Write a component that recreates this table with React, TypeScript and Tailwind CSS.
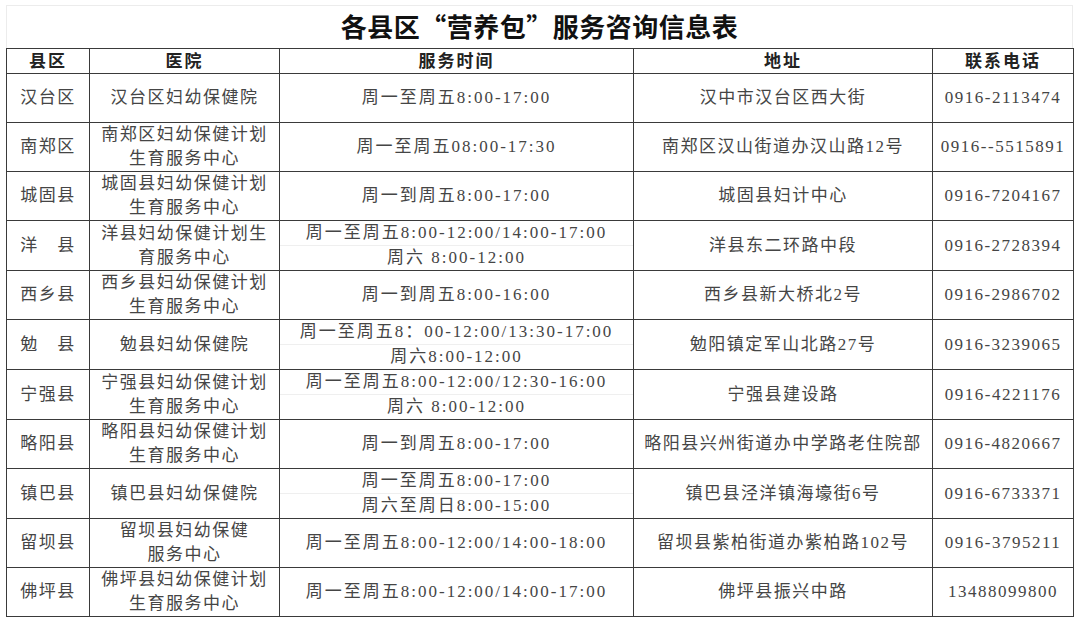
import React from "react";

// ---------------------------------------------------------------------------
// Data
// ---------------------------------------------------------------------------

interface Row {
  county: string;
  hospital: string[];
  hours: string[];
  address: string;
  phone: string;
}

const rows: Row[] = [
  { county: "汉台区", hospital: ["汉台区妇幼保健院"], hours: ["周一至周五8:00-17:00"], address: "汉中市汉台区西大街", phone: "0916-2113474" },
  { county: "南郑区", hospital: ["南郑区妇幼保健计划", "生育服务中心"], hours: ["周一至周五08:00-17:30"], address: "南郑区汉山街道办汉山路12号", phone: "0916--5515891" },
  { county: "城固县", hospital: ["城固县妇幼保健计划", "生育服务中心"], hours: ["周一到周五8:00-17:00"], address: "城固县妇计中心", phone: "0916-7204167" },
  { county: "洋　县", hospital: ["洋县妇幼保健计划生", "育服务中心"], hours: ["周一至周五8:00-12:00/14:00-17:00", "周六 8:00-12:00"], address: "洋县东二环路中段", phone: "0916-2728394" },
  { county: "西乡县", hospital: ["西乡县妇幼保健计划", "生育服务中心"], hours: ["周一到周五8:00-16:00"], address: "西乡县新大桥北2号", phone: "0916-2986702" },
  { county: "勉　县", hospital: ["勉县妇幼保健院"], hours: ["周一至周五8：00-12:00/13:30-17:00", "周六8:00-12:00"], address: "勉阳镇定军山北路27号", phone: "0916-3239065" },
  { county: "宁强县", hospital: ["宁强县妇幼保健计划", "生育服务中心"], hours: ["周一至周五8:00-12:00/12:30-16:00", "周六 8:00-12:00"], address: "宁强县建设路", phone: "0916-4221176" },
  { county: "略阳县", hospital: ["略阳县妇幼保健计划", "生育服务中心"], hours: ["周一到周五8:00-17:00"], address: "略阳县兴州街道办中学路老住院部", phone: "0916-4820667" },
  { county: "镇巴县", hospital: ["镇巴县妇幼保健院"], hours: ["周一至周五8:00-17:00", "周六至周日8:00-15:00"], address: "镇巴县泾洋镇海壕街6号", phone: "0916-6733371" },
  { county: "留坝县", hospital: ["留坝县妇幼保健", "服务中心"], hours: ["周一至周五8:00-12:00/14:00-18:00"], address: "留坝县紫柏街道办紫柏路102号", phone: "0916-3795211" },
  { county: "佛坪县", hospital: ["佛坪县妇幼保健计划", "生育服务中心"], hours: ["周一至周五8:00-12:00/14:00-17:00"], address: "佛坪县振兴中路", phone: "13488099800" },
];

const font = {
  fontFamily: '"Liberation Serif", "Noto Sans CJK SC", serif',
};

const cjk = {
  fontFamily: '"Noto Sans CJK SC", sans-serif',
};

// ---------------------------------------------------------------------------
// Component
// ---------------------------------------------------------------------------

export default function App() {
  const cell = "border-[1.5px] border-[#3a3a3a] text-center align-middle p-0";

  return (
    <div className="w-[1080px] h-[619px] bg-white overflow-hidden pt-[5px] pl-[6px]" style={font}>
      <div className="w-[1067px]">
        {/* Title */}
        <div className="h-[43px] border-t border-x border-[#ececec] flex items-center justify-center">
          <h1 className="text-[26px] font-bold text-[#111] leading-none tracking-[0.5px]">
            各县区<span style={cjk}>“</span>营养包<span style={cjk}>”</span>服务咨询信息表
          </h1>
        </div>

        <table className="table-fixed border-collapse w-[1067px] text-[#454545]">
          <colgroup>
            <col className="w-[83px]" />
            <col className="w-[190px]" />
            <col className="w-[354px]" />
            <col className="w-[299px]" />
            <col className="w-[141px]" />
          </colgroup>
          <thead>
            <tr className="h-[25px]">
              {["县区", "医院", "服务时间", "地址", "联系电话"].map((h) => (
                <th
                  key={h}
                  className={`${cell} text-[17px] font-bold text-[#222] leading-none tracking-[2px]`}
                >
                  {h}
                </th>
              ))}
            </tr>
          </thead>
          <tbody>
            {rows.map((r) => (
              <tr key={r.county} className="h-[49px] text-[17px] leading-[24px] tracking-[1.5px]">
                <td className={cell}>{r.county}</td>
                <td className={cell}>
                  {r.hospital.map((l) => (
                    <div key={l}>{l}</div>
                  ))}
                </td>
                <td className={`${cell} tracking-[2px]`}>
                  {r.hours.map((l, i) => (
                    <div
                      key={l}
                      className={
                        r.hours.length > 1 && i === 0 ? "border-b border-[#efefef]" : ""
                      }
                    >
                      {l}
                    </div>
                  ))}
                </td>
                <td className={cell}>{r.address}</td>
                <td className={`${cell} tracking-[1.5px]`}>{r.phone}</td>
              </tr>
            ))}
          </tbody>
        </table>
      </div>
    </div>
  );
}
